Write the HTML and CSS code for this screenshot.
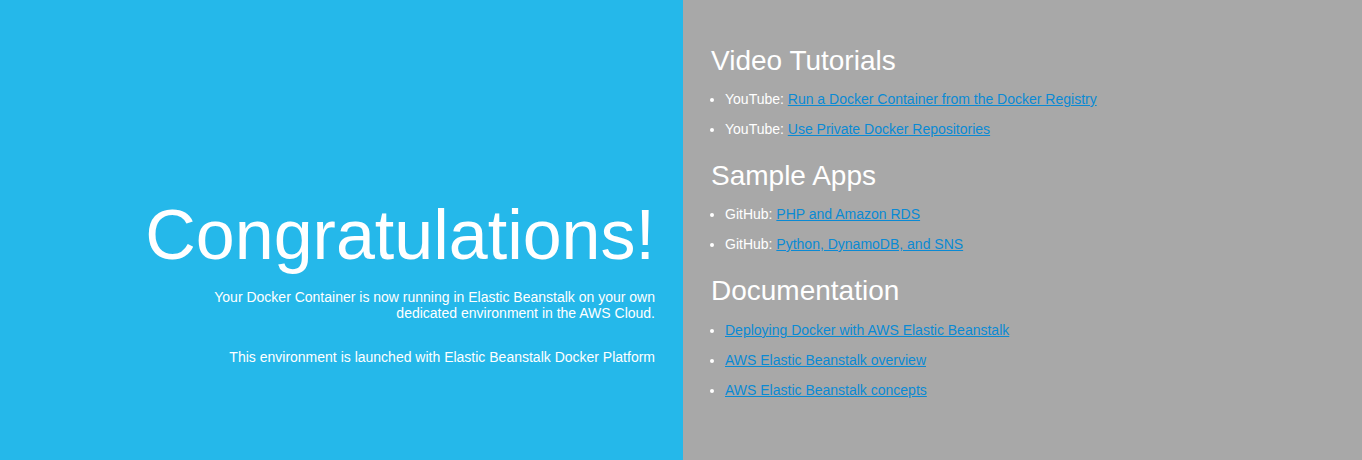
FILE: index.html
```html
<!DOCTYPE html>
<html lang="en">
<head>
<meta charset="utf-8">
<title>Welcome</title>
<link rel="stylesheet" href="styles.css">
</head>
<body>
<div class="page">
  <div class="textColumn">
    <h1>Congratulations!</h1>
    <p>Your Docker Container is now running in Elastic Beanstalk on your own dedicated environment in the AWS Cloud.</p>
    <p>This environment is launched with Elastic Beanstalk Docker Platform</p>
  </div>
  <div class="linksColumn">
    <h2>Video Tutorials</h2>
    <ul>
      <li>YouTube: <a href="#">Run a Docker Container from the Docker Registry</a></li>
      <li>YouTube: <a href="#">Use Private Docker Repositories</a></li>
    </ul>
    <h2>Sample Apps</h2>
    <ul>
      <li>GitHub: <a href="#">PHP and Amazon RDS</a></li>
      <li>GitHub: <a href="#">Python, DynamoDB, and SNS</a></li>
    </ul>
    <h2>Documentation</h2>
    <ul class="docs">
      <li><a href="#">Deploying Docker with AWS Elastic Beanstalk</a></li>
      <li><a href="#">AWS Elastic Beanstalk overview</a></li>
      <li><a href="#">AWS Elastic Beanstalk concepts</a></li>
    </ul>
  </div>
</div>
</body>
</html>
```

FILE: styles.css
```css
html, body {
  margin: 0;
  padding: 0;
  height: 100%;
}
body {
  color: #ffffff;
  font-family: "Liberation Sans", Arial, sans-serif;
  font-size: 14px;
  background-color: #a8a8a8;
}
.page {
  display: flex;
  height: 100%;
  min-height: 460px;
}
.textColumn {
  box-sizing: border-box;
  width: 683px;
  flex: none;
  padding: 195px 28px 28px;
  background-color: #25b8ea;
  text-align: right;
  display: flex;
  flex-direction: column;
  align-items: flex-end;
}
.textColumn h1 {
  font-size: 70px;
  font-weight: normal;
  line-height: 80px;
  margin: 0;
}
.textColumn p {
  width: 75%;
  margin: 14px 0;
  line-height: 16px;
}
.linksColumn {
  box-sizing: border-box;
  flex: 1;
  padding: 22px 28px 28px;
  background-color: #a8a8a8;
}
.linksColumn h2 {
  font-size: 28px;
  font-weight: normal;
  line-height: 32px;
  margin: 23px 0 0;
}
.linksColumn ul {
  margin: 0;
  padding-left: 14px;
}
.linksColumn ul.docs {
  padding-top: 1px;
}
.linksColumn li {
  margin: 14px 0;
  line-height: 16px;
}
a {
  color: #0a8ad4;
}
```
